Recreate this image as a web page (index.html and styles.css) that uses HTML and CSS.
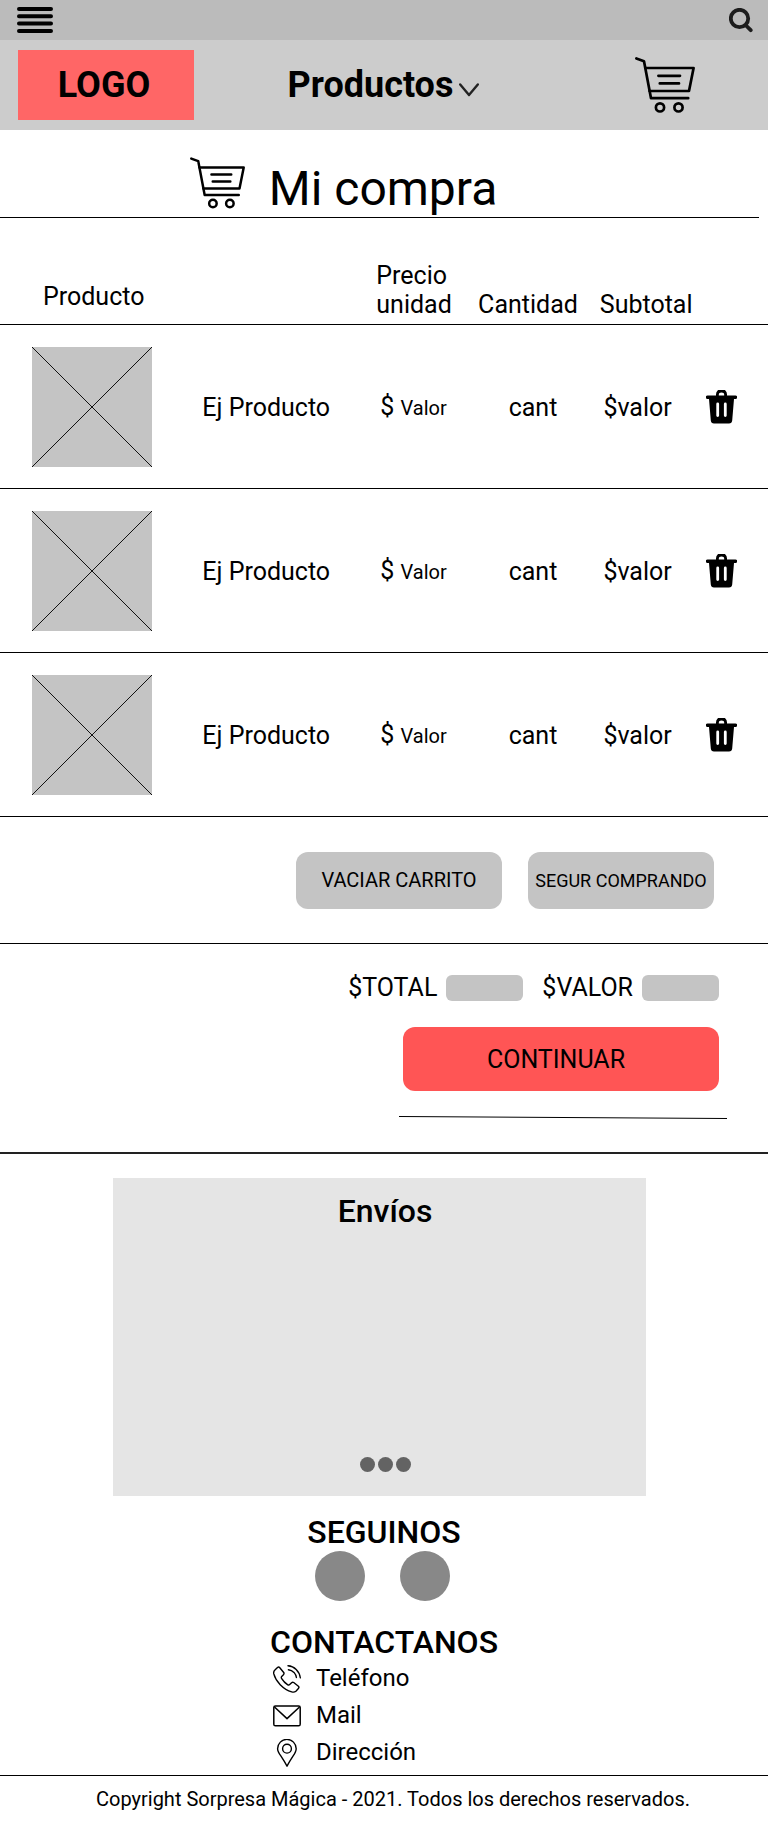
FILE: index.html
```html
<!DOCTYPE html>
<html lang="es">
<head>
<meta charset="utf-8">
<meta name="viewport" content="width=device-width, initial-scale=1">
<title>Mi compra</title>
<link rel="stylesheet" href="styles.css">
</head>
<body>
<svg class="sprite" aria-hidden="true">
  <symbol id="cart" viewBox="0 0 60 56">
    <g fill="none" stroke="currentColor" stroke-width="2.7" stroke-linecap="round" stroke-linejoin="round">
      <path d="M1.4 1.4 9 4.2 16 41.2H53.2"/>
      <path d="M10.4 11H58.6L54 34H14.6"/>
      <path d="M23.4 18.8H45M24.8 26.4H44"/>
      <circle cx="25" cy="50.4" r="4.1"/>
      <circle cx="43.5" cy="50.4" r="4.1"/>
    </g>
  </symbol>
  <symbol id="trash" viewBox="0 0 31 34">
    <path fill="currentColor" fill-rule="evenodd" d="M1.5 5.5H10V4.500a4.500 4.500 0 0 1 11 0V5.500H29.500a1.600 1.600 0 0 1 0 3.400H28L26.200 30.500Q25.900 33.500 23 33.500H8Q5.100 33.500 4.800 30.500L3 8.900H1.500a1.600 1.600 0 0 1 0-3.400ZM12.800 5.500H18.200V4.800a2.700 2.200 0 0 0-5.400 0ZM10.300 14V25.500a1.400 1.400 0 0 0 2.800 0V14a1.400 1.400 0 0 0-2.800 0ZM17.900 14V25.500a1.400 1.400 0 0 0 2.800 0V14a1.400 1.400 0 0 0-2.800 0Z"/>
  </symbol>
</svg>

<header>
  <div class="topbar">
    <button class="icon-btn" type="button" aria-label="Menú">
      <svg width="36" height="26" viewBox="0 0 36 26"><path d="M2 2H34M2 9.300H34M2 16.600H34M2 23.900H34" stroke="#000" stroke-width="4" stroke-linecap="round"/></svg>
    </button>
    <button class="icon-btn" type="button" aria-label="Buscar">
      <svg width="24" height="25" viewBox="0 0 24 25" fill="none" stroke="#1c1c1c" stroke-width="3.800"><circle cx="10.500" cy="10.500" r="8.700"/><path d="M17 17.500 21.700 22.200" stroke-linecap="round"/></svg>
    </button>
  </div>
  <nav class="navbar">
    <a class="logo" href="#">LOGO</a>
    <button class="menu" type="button">Productos
      <svg width="20" height="14" viewBox="0 0 20 14"><path d="M1.200 1.400 10 12 18.800 1.400" fill="none" stroke="#222" stroke-width="2.400" stroke-linecap="round" stroke-linejoin="round"/></svg>
    </button>
    <a class="cart-link" href="#" aria-label="Carrito"><svg width="60" height="56"><use href="#cart"/></svg></a>
  </nav>
</header>

<main>
  <div class="title">
    <svg width="55" height="52"><use href="#cart"/></svg>
    <h1>Mi compra</h1>
  </div>

  <table class="items">
    <colgroup><col class="c-image"><col class="c-name"><col class="c-price"><col class="c-qty"><col class="c-sub"><col></colgroup>
    <thead>
      <tr><th class="product" colspan="2">Producto</th><th class="price">Precio unidad</th><th>Cantidad</th><th class="sub">Subtotal</th><td></td></tr>
    </thead>
    <tbody>
      <tr>
        <td class="image"><svg class="thumb" viewBox="0 0 120 120"><path d="M0 0 120 120M120 0 0 120" stroke="#111"/></svg></td>
        <td class="name">Ej Producto</td><td class="price">$ <small>Valor</small></td><td class="qty">cant</td><td class="sub">$valor</td>
        <td class="remove"><button class="icon-btn" type="button" aria-label="Eliminar"><svg width="31" height="34"><use href="#trash"/></svg></button></td>
      </tr>
      <tr>
        <td class="image"><svg class="thumb" viewBox="0 0 120 120"><path d="M0 0 120 120M120 0 0 120" stroke="#111"/></svg></td>
        <td class="name">Ej Producto</td><td class="price">$ <small>Valor</small></td><td class="qty">cant</td><td class="sub">$valor</td>
        <td class="remove"><button class="icon-btn" type="button" aria-label="Eliminar"><svg width="31" height="34"><use href="#trash"/></svg></button></td>
      </tr>
      <tr>
        <td class="image"><svg class="thumb" viewBox="0 0 120 120"><path d="M0 0 120 120M120 0 0 120" stroke="#111"/></svg></td>
        <td class="name">Ej Producto</td><td class="price">$ <small>Valor</small></td><td class="qty">cant</td><td class="sub">$valor</td>
        <td class="remove"><button class="icon-btn" type="button" aria-label="Eliminar"><svg width="31" height="34"><use href="#trash"/></svg></button></td>
      </tr>
    </tbody>
  </table>

  <div class="actions">
    <button class="btn btn-empty" type="button">VACIAR CARRITO</button>
    <button class="btn btn-keep" type="button">SEGUR COMPRANDO</button>
  </div>

  <section class="summary">
    <div class="totals">
      <label for="total">$TOTAL</label><input id="total" type="text" readonly>
      <label for="valor">$VALOR</label><input id="valor" type="text" readonly>
    </div>
    <button class="btn btn-continue" type="button">CONTINUAR</button>
    <svg class="rule" width="328" height="3" viewBox="0 0 328 3"><path d="M0 .5 328 2.500" stroke="#000"/></svg>
  </section>

  <section class="shipping">
    <h2>Envíos</h2>
    <div class="dots"><span></span><span></span><span></span></div>
  </section>
</main>

<footer>
  <h2>SEGUINOS</h2>
  <div class="social"><a href="#" aria-label="Red social 1"></a><a href="#" aria-label="Red social 2"></a></div>
  <div class="contact">
    <h2>CONTACTANOS</h2>
    <ul>
      <li><svg width="28" height="28" viewBox="0 0 28 28" fill="none" stroke="#000" stroke-width="1.400" stroke-linecap="round" stroke-linejoin="round"><path d="M6.800 2.700 10.900 7.700Q11.300 8.700 10.400 9.700L8.700 11.400Q7.900 12.500 8.700 13.700 10.900 17.400 14.800 19.800 15.900 20.400 16.700 19.600L18.600 17.700Q19.600 16.900 20.700 17.500L25.400 21.200Q26.500 22.300 25.400 23.500L22.900 26.200Q21.300 27.600 18.700 26.900 12.600 25.200 7.200 19.700 2.200 14.400.800 8.900.300 6.600 1.900 5.100L4.500 2.500Q5.700 1.500 6.800 2.700Z"/><path d="M15 .700Q19.700 1 23.200 4.500 26.800 8.100 27.300 12.800M15.400 4.700Q18.600 5 21 7.400 23 9.600 23.400 12.500"/></svg>Teléfono</li>
      <li><svg width="28" height="22" viewBox="0 0 28 22" fill="none" stroke="#000" stroke-width="1.500" stroke-linejoin="round"><rect x=".8" y="1" width="26.400" height="19.800" rx="1.600"/><path d="M1.500 2 14 13.600 26.500 2"/></svg>Mail</li>
      <li><svg width="28" height="28" viewBox="0 0 28 28" fill="none" stroke="#000" stroke-width="1.400" stroke-linejoin="round"><path d="M14 27.200Q11.500 22.500 8 17.200 4.600 12.500 4.600 9.700A9.300 9.300 0 0 1 23.200 9.700Q23.200 12.500 20 17.200 16.500 22.500 14 27.200Z"/><circle cx="14" cy="9.700" r="4.400"/></svg>Dirección</li>
    </ul>
  </div>
  <p class="copyright">Copyright Sorpresa Mágica - 2021. Todos los derechos reservados.</p>
</footer>
</body>
</html>
```
FILE: styles.css
```css
* { box-sizing: border-box; }

body {
  margin: 0;
  background: #fff;
  color: #000;
  font: 25px/29px Roboto, "Liberation Sans", sans-serif;
}

h1, h2, p, ul { margin: 0; padding: 0; }
h2 { font-size: 32px; line-height: 38px; font-weight: 500; }
svg { display: block; flex: none; }
a { color: inherit; text-decoration: none; }
button { padding: 0; border: 0; background: none; color: inherit; font: inherit; cursor: pointer; }

.sprite { position: absolute; width: 0; height: 0; }
.icon-btn { display: block; }

.topbar {
  display: flex;
  justify-content: space-between;
  align-items: center;
  height: 40px;
  padding: 0 15px 0 17px;
  background: #bbb;
}

.navbar {
  display: grid;
  grid-template-columns: 176px 1fr 60px;
  align-items: center;
  padding: 10px 73px 10px 18px;
  background: #ccc;
  font-size: 36px;
  line-height: 42px;
  font-weight: 700;
}
.logo { padding: 14px 4px 14px 0; background: #f66; text-align: center; }
.menu {
  display: flex;
  justify-content: center;
  align-items: center;
  gap: 6px;
  padding-right: 62px;
}
.menu svg { margin-top: 10px; }

.title {
  display: flex;
  justify-content: center;
  gap: 24px;
  margin-right: 9px;
  padding: 27px 72px 0 0;
  border-bottom: 1px solid #000;
}
.title h1 { padding-top: 4px; font-size: 48px; line-height: 56px; font-weight: 400; }

.items { width: 100%; table-layout: fixed; border-collapse: separate; border-spacing: 0; }
.c-image { width: 24%; }
.c-name { width: 25%; }
.c-price { width: 13%; }
.c-qty { width: 13.5%; }
.c-sub { width: 14%; }
.items th, .items td { padding: 0; border-bottom: 1px solid #000; text-align: center; font-weight: 400; }
.items thead th, .items thead td { height: 107px; padding-bottom: 5px; vertical-align: bottom; }
.items thead .product { padding: 0 0 13px 43px; text-align: left; }
.items thead .price { text-align: left; }
.items thead .sub { padding-left: 20px; }
.items tbody td { height: 164px; }
.items tbody .image { padding-left: 32px; }
.thumb { width: 120px; height: 120px; background: #c4c4c4; }
.items tbody .name { padding: 2px 0 0 18px; text-align: left; }
.items tbody .price { padding: 2px 0 0 4px; text-align: left; }
.items tbody .qty { padding: 2px 0 0 10px; }
.items tbody .sub { padding: 2px 0 0 8px; }
.items tbody .remove { padding-right: 13px; }
.items small { font-size: 20px; }
.items .icon-btn { margin: 0 auto; }

.btn { border-radius: 12px; background: #c4c4c4; }
.actions {
  display: flex;
  justify-content: flex-end;
  gap: 26px;
  padding: 35px 54px 34px;
  border-bottom: 1px solid #000;
}
.actions .btn { height: 57px; }
.btn-empty { width: 206px; font-size: 20px; }
.btn-keep { width: 186px; font-size: 18px; }

.summary {
  display: flex;
  flex-direction: column;
  align-items: flex-end;
  padding: 30px 49px 33px;
  border-bottom: 2px solid #222;
}
.totals { display: flex; align-items: center; line-height: 28px; }
.totals input {
  width: 77px;
  height: 26px;
  margin-left: 9px;
  padding: 0 6px;
  border: 0;
  border-radius: 6px;
  background: #c4c4c4;
}
.totals input + label { margin-left: 19px; }
.btn-continue { width: 316px; height: 64px; margin-top: 25px; padding-right: 10px; background: #f55; }
.rule { margin: 25px -8px 0 0; }

.shipping {
  display: flex;
  flex-direction: column;
  justify-content: space-between;
  align-items: center;
  height: 318px;
  margin: 24px 122px 0 113px;
  padding: 14px 0 24px 11px;
  background: #e5e5e5;
}
.dots { display: flex; gap: 3px; }
.dots span { width: 15px; height: 15px; border-radius: 50%; background: #636363; }

footer { display: flex; flex-direction: column; align-items: center; padding-top: 17px; }
.social { display: flex; gap: 35px; margin-right: 3px; }
.social a { width: 50px; height: 50px; border-radius: 50%; background: #888; }
.contact { padding: 23px 0 4px; }
.contact h2 { line-height: 36px; }
.contact ul { list-style: none; font-size: 24px; }
.contact li { display: flex; align-items: center; gap: 15px; height: 37px; padding-left: 3px; }
.copyright {
  align-self: stretch;
  padding: 12px 0 29px 18px;
  border-top: 1px solid #000;
  font-size: 20px;
  line-height: 23px;
  text-align: center;
}
```
